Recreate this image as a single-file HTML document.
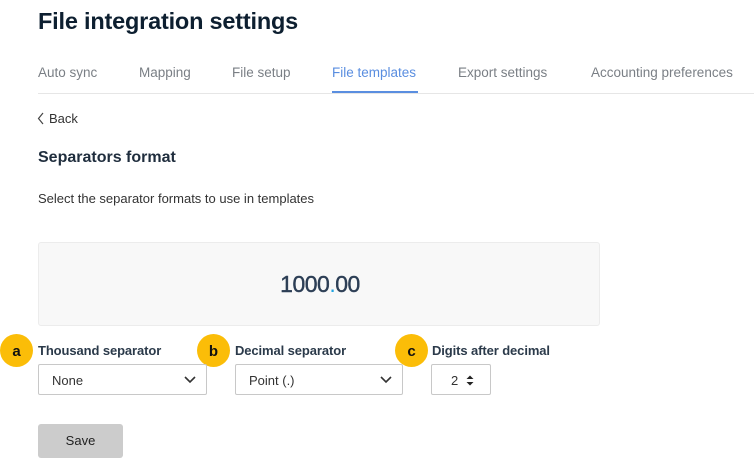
<!DOCTYPE html>
<html><head><style>
body{margin:0;width:754px;height:472px;background:#fff;font-family:"Liberation Sans",sans-serif;position:relative;overflow:hidden;color:#1f2d3d}
.a{position:absolute;white-space:nowrap}
h1{position:absolute;left:38px;top:8px;margin:0;font-size:23.5px;font-weight:bold;color:#0d1f30;letter-spacing:-0.2px}
.tab{position:absolute;top:65px;font-size:13.5px;color:#7a7f85}
.sel{position:absolute;top:364px;height:31px;border:1px solid #c8c8c8;border-radius:2px;box-sizing:border-box;font-size:13px;color:#333;line-height:31px;padding-left:13px}
.circ{position:absolute;width:33px;height:33px;border-radius:50%;background:#fbbd08;font-weight:bold;font-size:15px;text-align:center;line-height:35px;color:#111;top:334px}
.lbl{position:absolute;top:343px;font-size:13px;font-weight:bold;color:#2b3a4a;letter-spacing:-0.1px}
</style></head><body>
<h1>File integration settings</h1>
<div class="tab" style="left:38px">Auto sync</div>
<div class="tab" style="left:139px">Mapping</div>
<div class="tab" style="left:232px">File setup</div>
<div class="tab" style="left:332px;color:#5a8ee0">File templates</div>
<div class="tab" style="left:458px">Export settings</div>
<div class="tab" style="left:591px">Accounting preferences</div>
<div class="a" style="left:38px;top:93px;width:716px;height:1px;background:#e6e6e6"></div>
<div class="a" style="left:332px;top:91px;width:86px;height:2px;background:#5a8ee0"></div>
<svg class="a" style="left:37px;top:112px" width="8" height="13"><path d="M6 1 L1.5 6.5 L6 12" fill="none" stroke="#444" stroke-width="1.2"/></svg>
<div class="a" style="left:49px;top:111px;font-size:13px;color:#333">Back</div>
<div class="a" style="left:38px;top:149px;font-size:16px;font-weight:bold;color:#1f2d3d">Separators format</div>
<div class="a" style="left:38px;top:191px;font-size:13px;color:#333">Select the separator formats to use in templates</div>
<div class="a" style="left:38px;top:242px;width:562px;height:84px;box-sizing:border-box;background:#f8f8f8;border:1px solid #ececec;border-radius:3px"></div>
<div class="a" style="left:238px;top:271px;width:164px;text-align:center;font-size:23px;color:#2c3e55;letter-spacing:-0.5px;-webkit-text-stroke:0.4px #2c3e55">1000<span style="color:#1fa3e0;-webkit-text-stroke:0">.</span>00</div>
<div class="circ" style="left:0px">a</div>
<div class="circ" style="left:197px">b</div>
<div class="circ" style="left:395px">c</div>
<div class="lbl" style="left:38px">Thousand separator</div>
<div class="lbl" style="left:235px">Decimal separator</div>
<div class="lbl" style="left:432px">Digits after decimal</div>
<div class="sel" style="left:38px;width:169px">None<svg style="position:absolute;right:10px;top:11px" width="12" height="8"><path d="M1 1 L6 6 L11 1" fill="none" stroke="#333" stroke-width="1.6"/></svg></div>
<div class="sel" style="left:235px;width:168px">Point (.)<svg style="position:absolute;right:10px;top:11px" width="12" height="8"><path d="M1 1 L6 6 L11 1" fill="none" stroke="#333" stroke-width="1.6"/></svg></div>
<div class="sel" style="left:431px;width:60px;padding-left:19px">2<svg style="position:absolute;left:34px;top:10px" width="8" height="11"><path d="M0.5 4 L4 0.5 L7.5 4Z M0.5 7 L4 10.5 L7.5 7Z" fill="#222"/></svg></div>
<div class="a" style="left:38px;top:424px;width:85px;height:34px;background:#cccccc;border-radius:3px;text-align:center;line-height:34px;font-size:13px;color:#222">Save</div>
</body></html>
